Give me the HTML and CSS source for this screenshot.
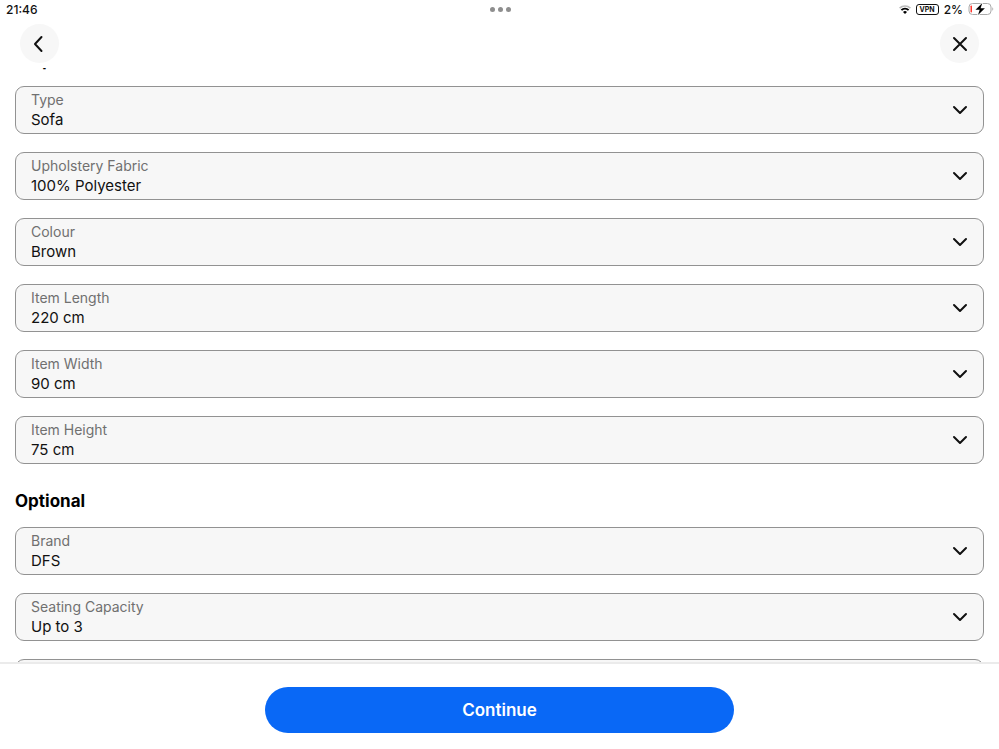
FILE: index.html
```html
<!DOCTYPE html>
<html lang="en">
<head>
  <meta charset="utf-8">
  <meta name="viewport" content="width=device-width, initial-scale=1">
  <title>Item specifics</title>
  <link rel="stylesheet" href="styles.css">
</head>
<body>

  <div class="status-bar">
    <span class="time">21:46</span>
    <span class="dots"><i></i><i></i><i></i></span>
    <span class="status-icons">
      <svg class="wifi" viewBox="0 0 12 9" width="12" height="9">
        <path d="M.6 3.2a7.8 7.8 0 0 1 10.8 0" fill="none" stroke="#bbb" stroke-width="1.6"/>
        <path d="M2.4 5.2a5.1 5.1 0 0 1 7.2 0" fill="none" stroke="#000" stroke-width="1.9"/>
        <path d="M6 9 4 7a2.8 2.8 0 0 1 4 0z"/>
      </svg>
      <span class="vpn">VPN</span>
      <span class="percent">2%</span>
      <svg class="battery" viewBox="0 0 26 14" width="26" height="14">
        <rect x="1" y="1.5" width="22" height="11" rx="3.5" fill="none" stroke="#aaa"/>
        <path d="M24.3 5.2v3.6c1.3-.6 1.3-3 0-3.6z" fill="#aaa"/>
        <rect x="2.5" y="3.5" width="1.5" height="7" rx=".7" fill="#ff3b30"/>
        <path d="M14.3 1 7.5 7.8h4.2L10 13l6.9-6.7h-4.3z" stroke="#fff" stroke-width="1.6" paint-order="stroke"/>
      </svg>
    </span>
  </div>

  <header class="nav">
    <button class="round" type="button" aria-label="Back">
      <svg viewBox="0 0 20 20" width="20" height="20"><path d="M11.500 3 5 10l6.500 7"/></svg>
    </button>
    <button class="round" type="button" aria-label="Close">
      <svg viewBox="0 0 20 20" width="20" height="20"><path d="m4 4 12 12m0-12L4 16"/></svg>
    </button>
  </header>

  <main class="content">
    <h2>Required</h2>
    <div class="fields">
      <div class="field">
        <label for="type">Type</label>
        <select id="type"><option>Sofa</option></select>
        <svg class="chevron" viewBox="0 0 16 10" width="16" height="10"><path d="m2 2 6 6 6-6"/></svg>
      </div>
      <div class="field">
        <label for="fabric">Upholstery Fabric</label>
        <select id="fabric"><option>100% Polyester</option></select>
        <svg class="chevron" viewBox="0 0 16 10" width="16" height="10"><path d="m2 2 6 6 6-6"/></svg>
      </div>
      <div class="field">
        <label for="colour">Colour</label>
        <select id="colour"><option>Brown</option></select>
        <svg class="chevron" viewBox="0 0 16 10" width="16" height="10"><path d="m2 2 6 6 6-6"/></svg>
      </div>
      <div class="field">
        <label for="length">Item Length</label>
        <select id="length"><option>220 cm</option></select>
        <svg class="chevron" viewBox="0 0 16 10" width="16" height="10"><path d="m2 2 6 6 6-6"/></svg>
      </div>
      <div class="field">
        <label for="width">Item Width</label>
        <select id="width"><option>90 cm</option></select>
        <svg class="chevron" viewBox="0 0 16 10" width="16" height="10"><path d="m2 2 6 6 6-6"/></svg>
      </div>
      <div class="field">
        <label for="height">Item Height</label>
        <select id="height"><option>75 cm</option></select>
        <svg class="chevron" viewBox="0 0 16 10" width="16" height="10"><path d="m2 2 6 6 6-6"/></svg>
      </div>
    </div>

    <h2>Optional</h2>
    <div class="fields">
      <div class="field">
        <label for="brand">Brand</label>
        <select id="brand"><option>DFS</option></select>
        <svg class="chevron" viewBox="0 0 16 10" width="16" height="10"><path d="m2 2 6 6 6-6"/></svg>
      </div>
      <div class="field">
        <label for="seating">Seating Capacity</label>
        <select id="seating"><option>Up to 3</option></select>
        <svg class="chevron" viewBox="0 0 16 10" width="16" height="10"><path d="m2 2 6 6 6-6"/></svg>
      </div>
      <div class="field"></div>
    </div>
  </main>

  <footer class="footer">
    <button class="continue" type="button">Continue</button>
  </footer>

</body>
</html>
```
FILE: styles.css
```css
* {
  box-sizing: border-box;
}
body {
  margin: 0;
  height: 100vh;
  display: flex;
  flex-direction: column;
  background: #fff;
  color: #111;
  font-family: Inter, "Liberation Sans", sans-serif;
}
button, select {
  font-family: inherit;
  cursor: pointer;
}

/* status bar */
.status-bar {
  flex: none;
  display: grid;
  grid-template-columns: 1fr auto 1fr;
  align-items: center;
  height: 18px;
  padding: 0 5px 0 6px;
  font-size: 12px;
  font-weight: 500;
}
.dots {
  display: flex;
  gap: 3px;
}
.dots i {
  width: 5px;
  height: 5px;
  border-radius: 50%;
  background: #8e8e8e;
}
.status-icons {
  display: flex;
  align-items: center;
  justify-content: flex-end;
  gap: 5px;
}
.vpn {
  padding: 0 3px;
  border: 1px solid #111;
  border-radius: 3px;
  font-size: 7px;
  font-weight: 700;
  line-height: 9px;
}

/* back and close */
.nav {
  flex: none;
  display: flex;
  justify-content: space-between;
  height: 50px;
  padding: 6px 20px;
}
.round {
  display: flex;
  align-items: center;
  justify-content: center;
  width: 39px;
  height: 39px;
  padding: 0;
  border: none;
  border-radius: 50%;
  background: #f7f7f7;
}
.round path, .chevron path {
  fill: none;
  stroke: #111;
  stroke-width: 2;
  stroke-linecap: round;
  stroke-linejoin: round;
}

/* form */
.content {
  flex: 1;
  min-height: 0;
  overflow: hidden;
  padding: 0 15px;
}
h2 {
  margin: 25px 0 14px;
  font-size: 17px;
  font-weight: 700;
  line-height: 24px;
  color: #000;
}
/* first heading is scrolled under the nav */
h2:first-child {
  margin-top: -20px;
}
.fields {
  display: grid;
  gap: 18px;
}
.field {
  display: grid;
  grid-template-columns: 1fr auto;
  grid-template-rows: 18px 20px;
  align-items: center;
  padding: 4px 15px;
  border: 1px solid #929292;
  border-radius: 9px;
  background: #f7f7f7;
}
.field label {
  grid-area: 1 / 1;
  font-size: 14px;
  line-height: 18px;
  color: #707070;
}
.field select {
  grid-area: 1 / 1 / 3 / 3;
  width: 100%;
  height: 38px;
  padding: 19px 0 0;
  border: none;
  appearance: none;
  background: none;
  font-size: 15px;
  line-height: 19px;
  color: #111;
}
.chevron {
  grid-area: 1 / 2 / 3 / 3;
  pointer-events: none;
}

/* footer */
.footer {
  flex: none;
  display: flex;
  justify-content: center;
  padding: 23px 0 16px;
  border-top: 2px solid #ebebeb;
}
.continue {
  width: 47%;
  height: 46px;
  border: none;
  border-radius: 23px;
  background: #0968f6;
  color: #fff;
  font-size: 17px;
  font-weight: 600;
}
```
